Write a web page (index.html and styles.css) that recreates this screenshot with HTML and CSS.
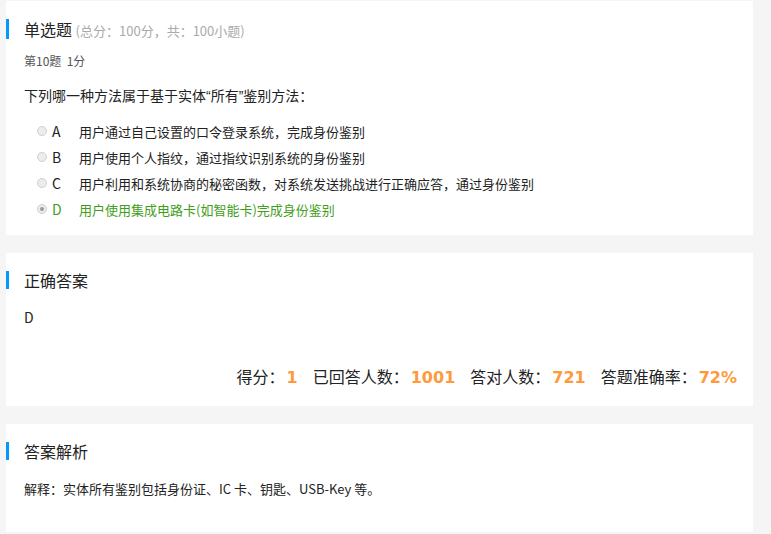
FILE: index.html
```html
<!DOCTYPE html>
<html lang="zh-CN">
<head>
    <meta charset="UTF-8">
    <meta name="viewport" content="width=device-width, initial-scale=1.0">
    <title>单选题</title>
    <link rel="stylesheet" href="styles.css">
</head>
<body>
    <div class="page">
        <!-- 题目 -->
        <div class="card card-question">
            <h3 class="card-title">单选题 <span class="title-note">(总分：100分，共：100小题)</span></h3>
            <div class="q-meta">第10题&nbsp;&nbsp;1分</div>
            <div class="q-text">下列哪一种方法属于基于实体<span class="quote">“</span>所有<span class="quote">”</span>鉴别方法：</div>
            <ul class="options">
                <li class="option"><span class="radio"></span><span class="opt-key">A</span><span class="opt-text">用户通过自己设置的口令登录系统，完成身份鉴别</span></li>
                <li class="option"><span class="radio"></span><span class="opt-key">B</span><span class="opt-text">用户使用个人指纹，通过指纹识别系统的身份鉴别</span></li>
                <li class="option"><span class="radio"></span><span class="opt-key">C</span><span class="opt-text">用户利用和系统协商的秘密函数，对系统发送挑战进行正确应答，通过身份鉴别</span></li>
                <li class="option is-right"><span class="radio checked"></span><span class="opt-key">D</span><span class="opt-text">用户使用集成电路卡(如智能卡)完成身份鉴别</span></li>
            </ul>
        </div>

        <!-- 正确答案 -->
        <div class="card card-answer">
            <h3 class="card-title small">正确答案</h3>
            <div class="answer">D</div>
            <div class="stats">
                <span class="stat-label">得分：</span><span class="stat-num">1</span>
                <span class="stat-label">已回答人数：</span><span class="stat-num">1001</span>
                <span class="stat-label">答对人数：</span><span class="stat-num">721</span>
                <span class="stat-label">答题准确率：</span><span class="stat-num last">72%</span>
            </div>
        </div>

        <!-- 答案解析 -->
        <div class="card card-analysis">
            <h3 class="card-title small">答案解析</h3>
            <div class="analysis">解释：实体所有鉴别包括身份证、IC 卡、钥匙、USB-Key 等。</div>
        </div>
    </div>
</body>
</html>
```

FILE: styles.css
```css
:root {
    --page-bg: #f5f5f5;
    --card-bg: #ffffff;
    --blue: #0099ff;
    --text: #333333;
    --muted: #aaaaaa;
    --green: #3f9e1b;
    --orange: #ff9a3c;
}

* {
    box-sizing: border-box;
    margin: 0;
    padding: 0;
}

body {
    background: var(--page-bg);
    color: var(--text);
    font-family: "Microsoft YaHei", "Noto Sans CJK SC", sans-serif;
}

.page {
    display: flex;
    flex-direction: column;
    gap: 18px;
    width: 747px;
    margin: 1px 0 0 6px;
}

.card {
    background: var(--card-bg);
    padding: 18px 16px 0 0;
}

.card-title {
    height: 20px;
    line-height: 20px;
    border-left: 3px solid var(--blue);
    padding-left: 15px;
    font-size: 16px;
    font-weight: normal;
    color: #222;
}

.card-title.small {
    height: 18px;
    line-height: 18px;
}

.title-note {
    font-size: 13px;
    color: var(--muted);
}

.q-meta,
.q-text,
.options,
.answer,
.analysis {
    margin-left: 18px;
}

/* 题目 */
.card-question {
    padding-bottom: 13px;
}

.q-meta {
    margin-top: 13px;
    height: 18px;
    font-size: 12px;
    line-height: 18px;
    color: #555;
}

.q-text {
    margin-top: 15px;
    height: 20px;
    font-size: 14px;
    line-height: 20px;
    color: #222;
}

.quote {
    font-family: "Liberation Sans", sans-serif;
}

.options {
    list-style: none;
    margin-top: 13px;
}

.option {
    display: flex;
    align-items: center;
    height: 26px;
    padding-left: 13px;
    font-size: 13px;
    color: #222;
}

.radio {
    width: 10px;
    height: 10px;
    border-radius: 50%;
    border: 1px solid #cfcfcf;
    background: #ececec;
    position: relative;
}

.radio.checked::after {
    content: '';
    position: absolute;
    top: 2px;
    left: 2px;
    width: 4px;
    height: 4px;
    border-radius: 50%;
    background: #9a9a9a;
}

.opt-key {
    width: 32px;
    padding-left: 5px;
    font-size: 14px;
}

.option.is-right {
    color: var(--green);
}

/* 正确答案 */
.card-answer {
    padding-bottom: 18px;
}

.answer {
    margin-top: 18px;
    height: 20px;
    font-size: 14px;
    line-height: 20px;
    color: #222;
}

.stats {
    margin-top: 37px;
    height: 24px;
    display: flex;
    justify-content: flex-end;
    align-items: baseline;
    color: #222;
}

.stat-label {
    font-size: 16px;
    line-height: 24px;
}

.stat-num {
    font-family: "DejaVu Sans", Verdana, sans-serif;
    font-weight: bold;
    font-size: 16px;
    line-height: 24px;
    color: var(--orange);
    padding: 0 15px 0 2px;
}

.stat-num.last {
    padding-right: 0;
}

/* 答案解析 */
.card-analysis {
    padding-bottom: 33px;
}

.analysis {
    margin-top: 19px;
    height: 20px;
    font-size: 13px;
    line-height: 20px;
    color: #222;
}
```
